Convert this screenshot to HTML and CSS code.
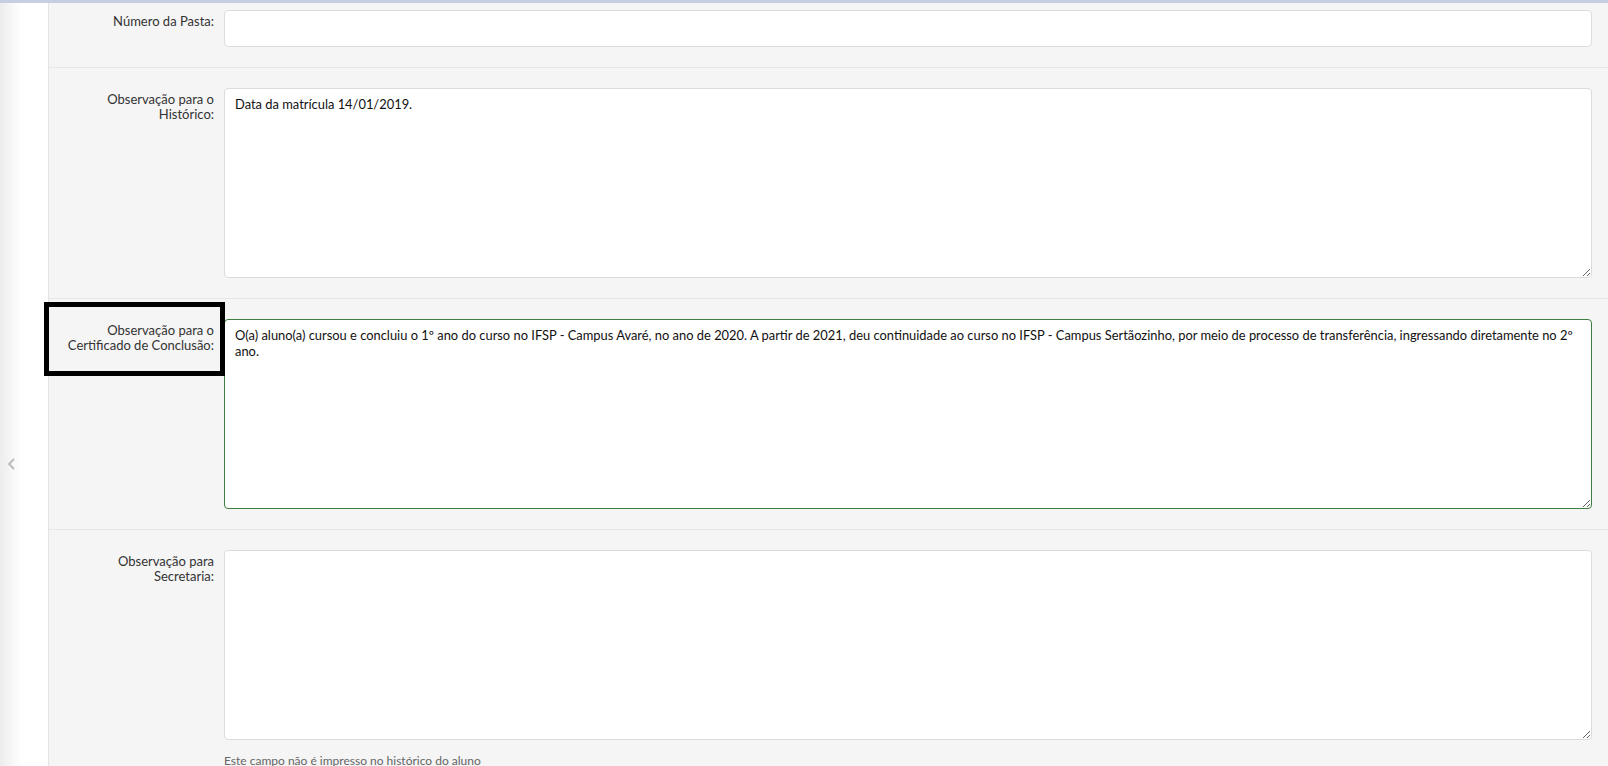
FILE: index.html
```html
<!DOCTYPE html>
<html lang="pt-BR">
<head>
    <meta charset="UTF-8">
    <title>Editar Aluno</title>
    <link rel="stylesheet" href="styles.css">
</head>
<body>
<div class="topbar"></div>
<div class="layout">
    <aside class="sidebar">
        <svg class="sidebar-toggle" width="10" height="12" viewBox="0 0 10 12">
            <polyline points="7,1 2,6 7,11" fill="none" stroke="#bdbdbd" stroke-width="2"/>
        </svg>
    </aside>
    <main class="content">
        <div class="form-row first">
            <label class="form-label" for="pasta">Número da Pasta:</label>
            <div class="form-field">
                <input class="form-input" id="pasta" type="text">
            </div>
        </div>
        <div class="form-row">
            <label class="form-label" for="obs_historico">Observação para o Histórico:</label>
            <div class="form-field">
                <textarea class="form-textarea" id="obs_historico">Data da matrícula 14/01/2019.</textarea>
            </div>
        </div>
        <div class="form-row">
            <div class="highlight-box"></div>
            <label class="form-label" for="obs_certificado">Observação para o Certificado de Conclusão:</label>
            <div class="form-field">
                <textarea class="form-textarea is-focused" id="obs_certificado">O(a) aluno(a) cursou e concluiu o 1º ano do curso no IFSP - Campus Avaré, no ano de 2020. A partir de 2021, deu continuidade ao curso no IFSP - Campus Sertãozinho, por meio de processo de transferência, ingressando diretamente no 2º ano.</textarea>
            </div>
        </div>
        <div class="form-row">
            <label class="form-label" for="obs_secretaria">Observação para<br>Secretaria:</label>
            <div class="form-field">
                <textarea class="form-textarea" id="obs_secretaria"></textarea>
                <p class="help-text">Este campo não é impresso no histórico do aluno</p>
            </div>
        </div>
    </main>
</div>
<script>
    const $focused = document.querySelector('.is-focused')
    $focused.focus()
    $focused.setSelectionRange($focused.value.length, $focused.value.length)
</script>
</body>
</html>
```

FILE: styles.css
```css
html, body {
    margin: 0;
    height: 100%;
    overflow: hidden;
}
body {
    font-family: Lato, "Liberation Sans", sans-serif;
    color: #333;
    background: #f5f5f5;
    display: flex;
    flex-direction: column;
}
.topbar {
    height: 3px;
    background: #c6cfe1;
    flex-shrink: 0;
}
.layout {
    display: flex;
    flex: 1;
    min-height: 0;
}
.sidebar {
    width: 49px;
    flex-shrink: 0;
    border-right: 1px solid #e4e4e4;
    background: linear-gradient(to right, #ededed, #fff 45%);
    padding-top: 455px;
    box-sizing: border-box;
}
.sidebar-toggle {
    display: block;
    margin-left: 7px;
}
.content {
    flex: 1;
    background: #f5f5f5;
}
.form-row {
    position: relative;
    display: grid;
    grid-template-columns: 175px 1fr;
    padding: 20px 16px 20px 0;
    border-bottom: 1px solid #e7e7e7;
}
.form-row.first {
    padding-top: 7px;
}
.form-label {
    position: relative;
    text-align: right;
    font-size: 13px;
    line-height: 15px;
    padding: 4px 10px 0 0;
    color: #333;
}
.form-input,
.form-textarea {
    display: block;
    width: 100%;
    box-sizing: border-box;
    border: 1px solid #dcdcdc;
    border-radius: 4px;
    background: #fff;
    font-family: Lato, "Liberation Sans", sans-serif;
    font-size: 12.9px;
    color: #111;
    outline: none;
}
.form-input {
    height: 37px;
    padding: 0 10px;
}
.form-textarea {
    height: 190px;
    padding: 8px 8px 8px 10px;
    line-height: 15.5px;
    resize: vertical;
}
.form-textarea.is-focused {
    border-color: #3b8040;
}
.help-text {
    margin: 12px 0 0;
    font-size: 12px;
    line-height: 18px;
    color: #666;
}
.highlight-box {
    position: absolute;
    top: 3px;
    left: -5px;
    width: 181px;
    height: 74px;
    box-sizing: border-box;
    border: 5px solid #000;
    pointer-events: none;
}
```
